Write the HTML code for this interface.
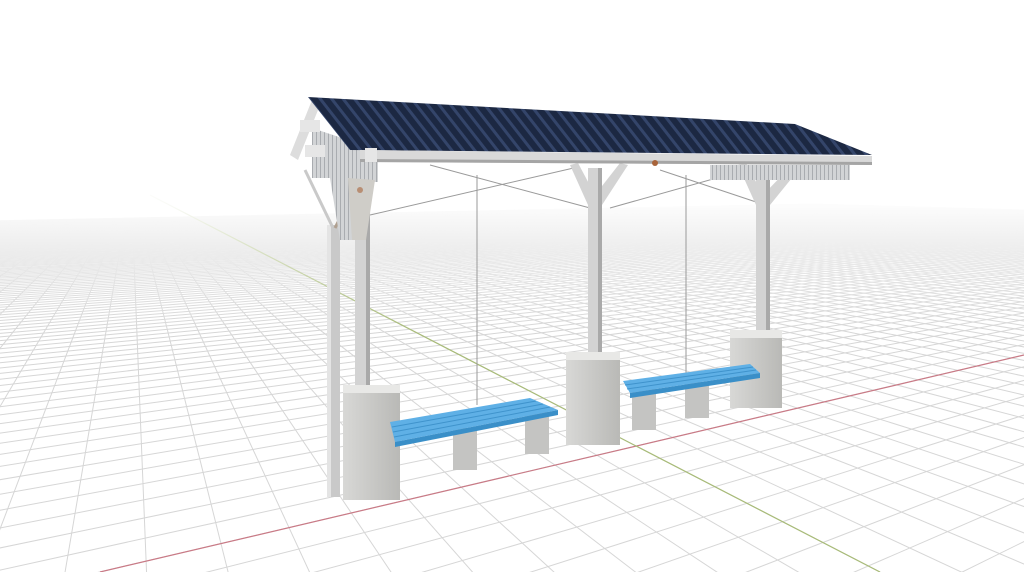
<!DOCTYPE html>
<html><head><meta charset="utf-8"><style>
html,body{margin:0;padding:0;background:#fff;width:1024px;height:572px;overflow:hidden}
#w{position:absolute;left:0;top:0;width:1024px;height:572px;overflow:hidden}
svg{display:block;overflow:hidden}
</style></head><body><div id="w">
<svg width="1024" height="572" viewBox="0 0 1024 572" xmlns="http://www.w3.org/2000/svg">
<defs>
<clipPath id="cl"><rect width="1024" height="572"/></clipPath>
<linearGradient id="fade" x1="0" y1="0" x2="0" y2="1">
<stop offset="0" stop-color="#fff" stop-opacity="1"/>
<stop offset="0.15" stop-color="#fff" stop-opacity="0.92"/>
<stop offset="0.4" stop-color="#fff" stop-opacity="0.6"/>
<stop offset="0.75" stop-color="#fff" stop-opacity="0.2"/>
<stop offset="1" stop-color="#fff" stop-opacity="0"/>
</linearGradient>
<pattern id="corr" width="9" height="200" patternUnits="userSpaceOnUse" patternTransform="rotate(-38)">
<rect width="9" height="200" fill="#1c2842"/>
<rect x="1" width="3" height="200" fill="#34456a"/>
</pattern>
<pattern id="rib" width="4" height="100" patternUnits="userSpaceOnUse">
<rect width="4" height="100" fill="#d2d4d6"/><rect width="1" height="100" fill="#a9acb0"/>
</pattern>
<linearGradient id="conc" x1="0" x2="1">
<stop offset="0" stop-color="#d8d8d6"/><stop offset="1" stop-color="#b9b9b6"/>
</linearGradient>
</defs>
<rect width="1024" height="572" fill="#fff"/>
<g stroke="#d6d6d6" stroke-width="1" id="grid" clip-path="url(#cl)"></g>
<line x1="100" y1="572" x2="1024" y2="355" stroke="#c97a86" stroke-width="1.2"/>
<line x1="150" y1="195" x2="880" y2="572" stroke="#a8bb78" stroke-width="1.2"/>
<rect x="0" y="185" width="1024" height="150" fill="url(#fade)"/>
<rect x="0" y="0" width="1024" height="186" fill="#fff"/>

<g stroke="#9a9a9a" stroke-width="1" fill="none">
<line x1="370" y1="215" x2="578" y2="167"/><line x1="430" y1="165" x2="590" y2="208"/>
<line x1="610" y1="208" x2="745" y2="170"/><line x1="660" y1="170" x2="765" y2="205"/>
<line x1="477" y1="175" x2="477" y2="405"/><line x1="686" y1="175" x2="686" y2="375"/>
</g>
<rect x="327" y="225" width="13" height="272" fill="#c9c9c9"/>
<rect x="327" y="225" width="4" height="272" fill="#e4e4e4"/>
<line x1="333" y1="228" x2="305" y2="170" stroke="#c9c9c9" stroke-width="3"/>
<line x1="335" y1="228" x2="365" y2="170" stroke="#b0a090" stroke-width="3"/>
<g fill="#d3d3d3">
<rect x="355" y="165" width="15" height="225"/>
<rect x="588" y="168" width="14" height="190"/>
<rect x="756" y="168" width="14" height="165"/>
<polygon points="588,205 570,165 578,163 595,195"/>
<polygon points="602,205 628,165 620,163 595,195"/>
<polygon points="756,205 738,165 746,163 763,195"/>
<polygon points="770,205 800,168 792,165 763,195"/>
</g>
<g fill="#a9a9a9"><rect x="366" y="165" width="4" height="225"/><rect x="598" y="168" width="4" height="190"/><rect x="766" y="168" width="4" height="165"/></g>
<rect x="710" y="165" width="140" height="15" fill="url(#rib)"/>
<polygon points="312,128 378,150 378,182 372,182 360,240 340,240 330,178 312,178" fill="url(#rib)"/>
<polygon points="348,178 375,180 366,240 352,240" fill="#cfcdc8"/>
<polygon points="290,155 312,100 320,105 298,160" fill="#ddd"/>
<rect x="300" y="120" width="20" height="12" fill="#e6e6e6"/>
<rect x="305" y="145" width="20" height="12" fill="#e6e6e6"/>
<polygon points="308,97 795,124 872,155 350,150" fill="url(#corr)"/>
<polygon points="360,150 872,156 872,165 360,162" fill="#d9d9d9"/>
<polygon points="360,159 872,162 872,165 360,162" fill="#a5a5a5"/>
<rect x="365" y="148" width="12" height="14" fill="#e6e6e6"/>
<circle cx="655" cy="163" r="3" fill="#a8643a"/><circle cx="360" cy="190" r="3" fill="#a8643a" opacity=".6"/>
<rect x="343" y="385" width="57" height="115" fill="url(#conc)"/>
<rect x="343" y="385" width="57" height="8" fill="#e8e8e6"/>
<rect x="566" y="352" width="54" height="93" fill="url(#conc)"/>
<rect x="566" y="352" width="54" height="8" fill="#e8e8e6"/>
<rect x="730" y="330" width="52" height="78" fill="url(#conc)"/>
<rect x="730" y="330" width="52" height="8" fill="#e8e8e6"/>
<g fill="#c4c4c2">
<rect x="453" y="428" width="24" height="42"/><rect x="525" y="412" width="24" height="42"/>
<rect x="632" y="388" width="24" height="42"/><rect x="685" y="382" width="24" height="36"/>
</g>
<polygon points="390,422 530,398 558,410 395,442" fill="#5fb0e6"/>
<polygon points="395,442 558,410 558,415 395,447" fill="#3a8fc8"/>
<g stroke="#3f93cc" stroke-width="1"><line x1="392" y1="427" x2="536" y2="401"/><line x1="393" y1="432" x2="543" y2="404"/><line x1="394" y1="437" x2="550" y2="407"/></g>
<polygon points="623,381 750,364 760,373 630,393" fill="#5fb0e6"/>
<polygon points="630,393 760,373 760,378 630,398" fill="#3a8fc8"/>
<g stroke="#3f93cc" stroke-width="1"><line x1="625" y1="385" x2="753" y2="367"/><line x1="627" y1="389" x2="756" y2="370"/></g>
</svg></div>
<script>
(function(){
var g=document.getElementById('grid'),ns='http://www.w3.org/2000/svg';
function L(p,q){var l=document.createElementNS(ns,'line');l.setAttribute('x1',p[0].toFixed(1));l.setAttribute('y1',p[1].toFixed(1));l.setAttribute('x2',q[0].toFixed(1));l.setAttribute('y2',q[1].toFixed(1));g.appendChild(l);}
var O=[636,446],V2=[1747,185],V1=[131,185],a=0.034,b=0.045,N=160,E=0.08;
function P(u,v){var d=1+a*u+b*v;return [(O[0]+a*u*V2[0]+b*v*V1[0])/d,(O[1]+a*u*V2[1]+b*v*V1[1])/d];}
for(var u=-N;u<=N;u++){var lo=Math.max(-N,(E-1-a*u)/b);if(lo<N)L(P(u,lo),P(u,N));}
for(var v=-N;v<=N;v++){var lo=Math.max(-N,(E-1-b*v)/a);if(lo<N)L(P(lo,v),P(N,v));}
})();
</script>
</body></html>
